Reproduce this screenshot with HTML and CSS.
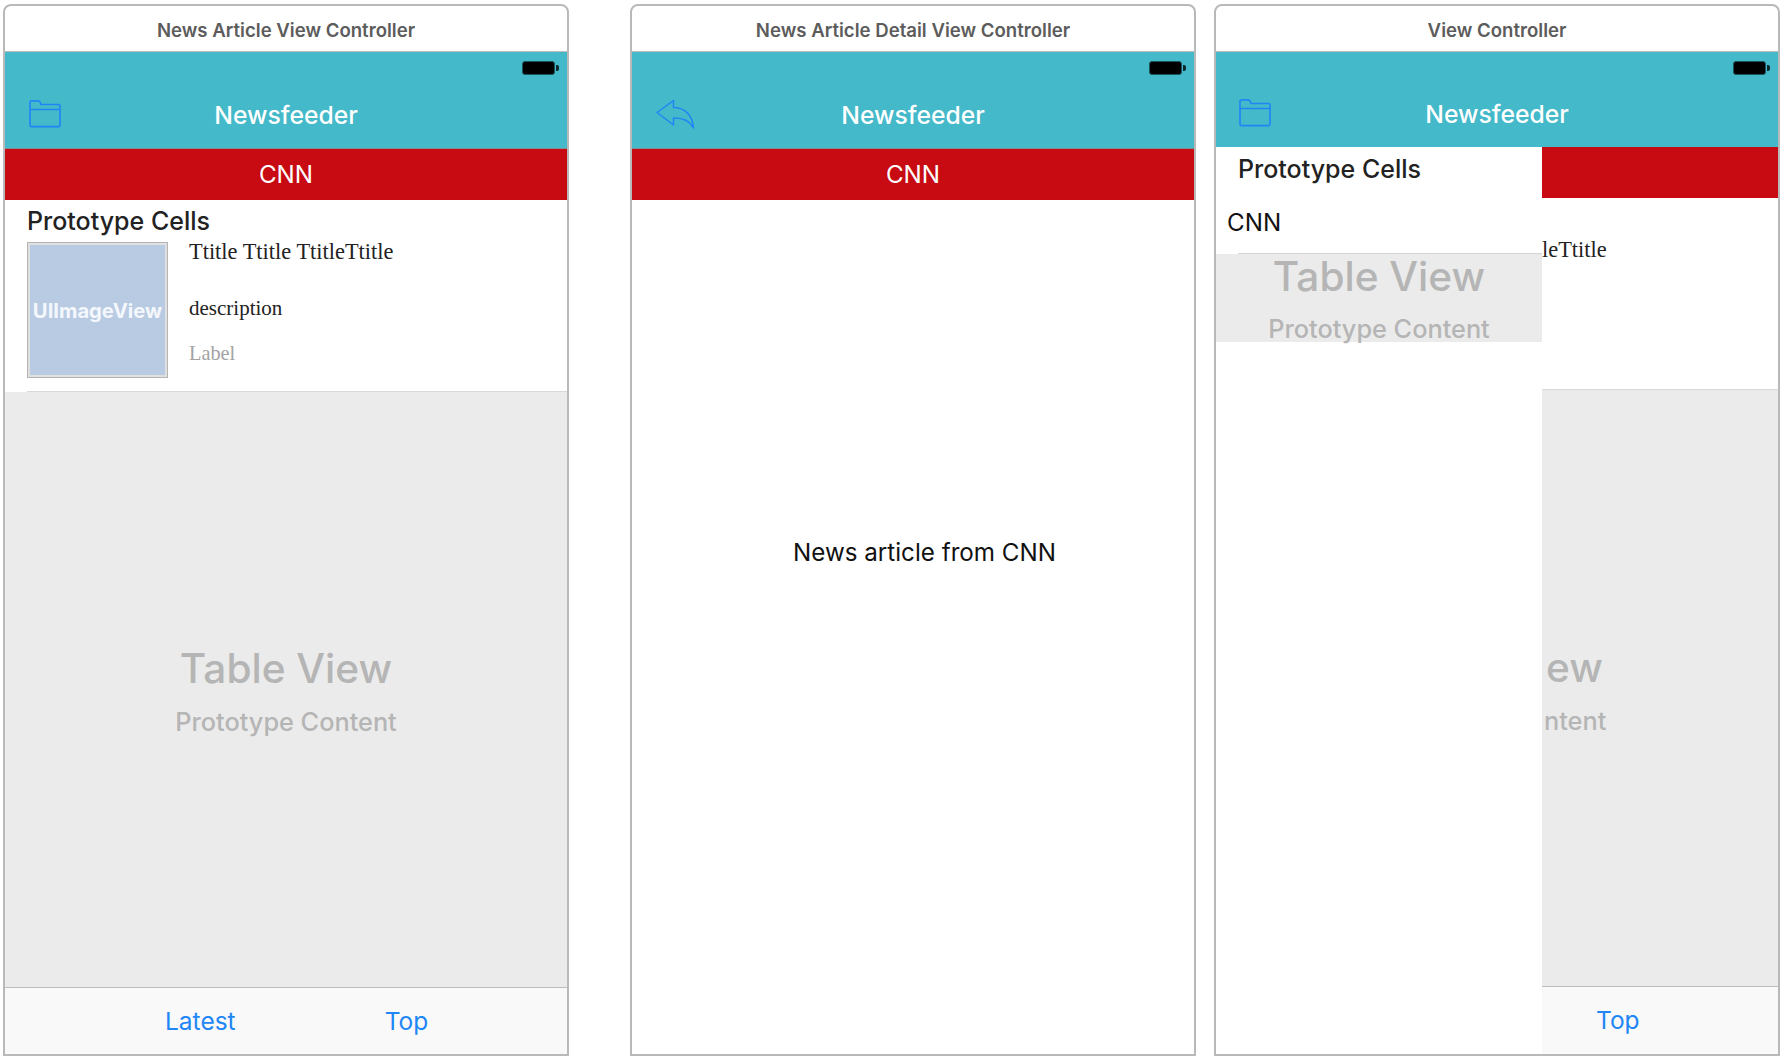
FILE: index.html
```html
<!DOCTYPE html>
<html lang="en">
<head>
  <meta charset="UTF-8">
  <title>Newsfeeder Storyboard</title>
  <link rel="stylesheet" href="styles.css">
</head>
<body>

  <!-- first scene -->
  <div class="frame frame-list">
    <div class="scene-title">News Article View Controller</div>
    <div class="topbar">
      <div class="status"><span class="battery"></span></div>
      <div class="nav">
        <svg class="nav-icon" width="36" height="32" viewBox="0 0 36 32"><path d="M4 16V6.500Q4 4.800 5.700 4.800H12Q13.500 4.800 14 6L15 8.500H32.500Q34 8.500 34 10V29Q34 30.700 32.500 30.700H5.500Q4 30.700 4 29ZM4 13.500H34" fill="none" stroke="#2186f5" stroke-width="1.700"/></svg>
        <span class="nav-title">Newsfeeder</span>
      </div>
    </div>
    <div class="channel">CNN</div>
    <div class="section-head">Prototype Cells</div>
    <div class="cell">
      <div class="thumb">UIImageView</div>
      <div class="cell-text">
        <div class="cell-title">Ttitle Ttitle TtitleTtitle</div>
        <div class="cell-desc">description</div>
        <div class="cell-label">Label</div>
      </div>
    </div>
    <div class="table-area">
      <div class="table-big">Table View</div>
      <div class="table-small">Prototype Content</div>
    </div>
    <div class="toolbar">
      <span>Latest</span>
      <span>Top</span>
    </div>
  </div>

  <!-- detail scene -->
  <div class="frame frame-detail">
    <div class="scene-title">News Article Detail View Controller</div>
    <div class="topbar">
      <div class="status"><span class="battery"></span></div>
      <div class="nav">
        <svg class="nav-icon" width="44" height="34" viewBox="0 0 44 34"><path d="M3 16.500L19.500 4.500V11.500C31 11.500 38.500 19 39.500 32C36 25 29 21.800 19.500 22V29Z" fill="none" stroke="#2186f5" stroke-width="1.500" stroke-linejoin="round"/></svg>
        <span class="nav-title">Newsfeeder</span>
      </div>
    </div>
    <div class="channel">CNN</div>
    <div class="article">News article from CNN</div>
  </div>

  <!-- side menu open, only a strip of the list still shows -->
  <div class="frame frame-menu">
    <div class="scene-title">View Controller</div>
    <div class="topbar">
      <div class="status"><span class="battery"></span></div>
      <div class="nav">
        <svg class="nav-icon" width="36" height="32" viewBox="0 0 36 32"><path d="M4 16V6.500Q4 4.800 5.700 4.800H12Q13.500 4.800 14 6L15 8.500H32.500Q34 8.500 34 10V29Q34 30.700 32.500 30.700H5.500Q4 30.700 4 29ZM4 13.500H34" fill="none" stroke="#2186f5" stroke-width="1.700"/></svg>
        <span class="nav-title">Newsfeeder</span>
      </div>
    </div>
    <div class="menu-layout">
      <div class="side-menu">
        <div class="menu-head">Prototype Cells</div>
        <div class="menu-row"><span class="menu-item">CNN</span></div>
        <div class="menu-table">
          <div class="table-big">Table View</div>
          <div class="table-small">Prototype Content</div>
        </div>
      </div>
      <div class="list-strip">
        <div class="channel"></div>
        <div class="strip-cell">
          <div class="cell-title">leTtitle</div>
        </div>
        <div class="table-area strip-table">
          <div class="table-big strip-big">ew</div>
          <div class="table-small">ntent</div>
        </div>
        <div class="toolbar strip-toolbar">
          <span>Top</span>
        </div>
      </div>
    </div>
  </div>

</body>
</html>
```

FILE: styles.css
```css
html, body {
  height: 100%;
}

body {
  margin: 0;
  padding: 4px 0 4px 3px;
  box-sizing: border-box;
  display: flex;
  background-color: #ffffff;
  font-family: Inter, "Noto Sans", sans-serif;
  overflow: hidden;
}

.frame {
  width: 566px;
  box-sizing: border-box;
  display: flex;
  flex-direction: column;
  border: 2px solid #b9b9b9;
  border-radius: 8px 8px 0 0;
  background-color: white;
  overflow: hidden;
}

.frame-detail {
  margin-left: 61px;
}

.frame-menu {
  margin-left: 18px;
}

.scene-title {
  height: 46px;
  padding-top: 2px;
  box-sizing: border-box;
  flex: none;
  display: flex;
  align-items: center;
  justify-content: center;
  border-bottom: 1px solid #bdbdbd;
  color: #5c5c5c;
  font-size: 18.600px;
  font-weight: 600;
}

.topbar {
  height: 97px;
  flex: none;
  box-sizing: border-box;
  background-color: #43b9c9;
  border-bottom: 1px solid #7f8f94;
}

.frame-menu .topbar {
  height: 95px;
  border-bottom: none;
}

.status {
  height: 9px;
  padding-top: 9px;
  padding-right: 12px;
  display: flex;
  justify-content: flex-end;
}

.battery {
  position: relative;
  width: 31px;
  height: 12px;
  flex: none;
  background-color: black;
  border: 1px solid #1d5560;
  border-radius: 3px;
}

.battery::after {
  content: "";
  position: absolute;
  right: -5px;
  top: 3px;
  width: 3px;
  height: 6px;
  background-color: #0c2a30;
  border-radius: 0 2px 2px 0;
}

.nav {
  position: relative;
  height: 60px;
  margin-top: 15px;
  display: flex;
  align-items: center;
  justify-content: center;
}

.frame-menu .nav {
  margin-top: 14px;
}

.nav-icon {
  position: absolute;
  left: 21px;
  top: 11px;
}

.frame-detail .nav-icon {
  left: 22px;
  top: 11px;
}

.frame-menu .nav-icon {
  left: 20px;
}

.nav-title {
  color: white;
  font-size: 24.700px;
  font-weight: 500;
}

.channel {
  height: 51px;
  flex: none;
  display: flex;
  align-items: center;
  justify-content: center;
  background-color: #c80b12;
  color: white;
  font-size: 24.200px;
}

.section-head {
  height: 42px;
  flex: none;
  box-sizing: border-box;
  padding-left: 22px;
  display: flex;
  align-items: center;
  color: #222222;
  font-size: 25px;
  font-weight: 500;
}

.cell {
  height: 150px;
  flex: none;
  box-sizing: border-box;
  margin-left: 22px;
  display: flex;
  gap: 21px;
  border-bottom: 1px solid #d9d9d9;
}

.thumb {
  width: 141px;
  height: 136px;
  flex: none;
  box-sizing: border-box;
  display: flex;
  align-items: center;
  justify-content: center;
  background-color: #b8cbe3;
  border: 3px solid #e0e0e0;
  outline: 1px solid #b4b4b4;
  outline-offset: -1px;
  color: #f4f7fb;
  font-size: 20.200px;
  font-weight: 700;
  white-space: nowrap;
}

.cell-text {
  margin-top: -2px;
  font-family: "Liberation Serif", serif;
  white-space: nowrap;
}

.cell-title {
  height: 24px;
  color: #222222;
  font-family: "Liberation Serif", serif;
  font-size: 22.400px;
  line-height: 24px;
}

.cell-desc {
  margin-top: 32px;
  height: 24px;
  color: #222222;
  font-size: 21px;
  line-height: 24px;
}

.cell-label {
  margin-top: 21px;
  color: #a3a3a3;
  font-size: 20.300px;
  line-height: 24px;
}

.table-area {
  flex: 1;
  padding-top: 3px;
  display: flex;
  flex-direction: column;
  align-items: center;
  justify-content: center;
  background-color: #ebebeb;
  border-bottom: 1px solid #bdbdbd;
}

.table-big {
  color: #b5b5b5;
  font-size: 40.600px;
  font-weight: 500;
  line-height: 48px;
}

.table-small {
  margin-top: 14px;
  color: #b5b5b5;
  font-size: 25.300px;
  font-weight: 500;
  line-height: 30px;
}

.toolbar {
  height: 66px;
  flex: none;
  box-sizing: border-box;
  padding-left: 160px;
  display: flex;
  align-items: center;
  gap: 149px;
  background-color: #f9f9f9;
  color: #2186f5;
  font-size: 24.500px;
}

.article {
  flex: 1;
  padding-left: 23px;
  padding-bottom: 150px;
  display: flex;
  align-items: center;
  justify-content: center;
  color: #111111;
  font-size: 24.200px;
}

.menu-layout {
  flex: 1;
  display: flex;
}

.side-menu {
  width: 326px;
  flex: none;
  display: flex;
  flex-direction: column;
}

.menu-head {
  height: 44px;
  padding-left: 22px;
  display: flex;
  align-items: center;
  color: #222222;
  font-size: 25px;
  font-weight: 500;
}

.menu-row {
  height: 63px;
  box-sizing: border-box;
  margin-left: 22px;
  display: flex;
  align-items: center;
  border-bottom: 1px solid #d4d4d4;
  color: #111111;
  font-size: 24.200px;
}

.menu-item {
  margin-left: -11px;
}

.menu-table {
  height: 88px;
  display: flex;
  flex-direction: column;
  align-items: center;
  background-color: #ebebeb;
}

.menu-table .table-big {
  line-height: 46px;
}

.menu-table .table-small {
  margin-top: 16px;
  line-height: 26px;
}

.list-strip {
  flex: 1;
  display: flex;
  flex-direction: column;
}

.strip-cell {
  height: 192px;
  flex: none;
  box-sizing: border-box;
  padding-top: 40px;
  border-bottom: 1px solid #d9d9d9;
}

.strip-table {
  align-items: flex-start;
  padding-left: 2px;
}

.strip-big {
  margin-left: 2px;
}

.strip-toolbar {
  height: 67px;
  padding-left: 54px;
  padding-bottom: 2px;
}
```
